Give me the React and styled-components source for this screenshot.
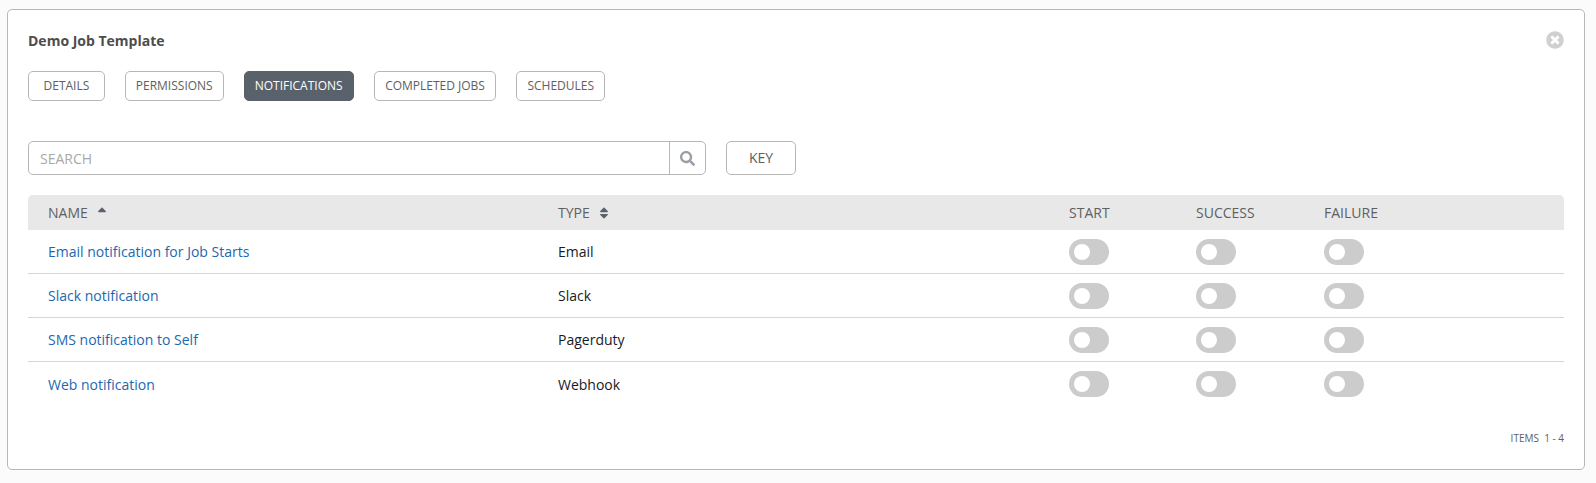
import React from "react";
import styled, { createGlobalStyle } from "styled-components";
import { FaSearch, FaTimesCircle, FaSort, FaSortUp } from "react-icons/fa";

const GlobalStyle = createGlobalStyle`
  html, body {
    margin: 0;
    padding: 0;
    background: #fbfbfb;
    font-family: "Open Sans", sans-serif;
  }
  * {
    box-sizing: border-box;
  }
`;

const Page = styled.div`
  height: 483px;
  padding: 9px 11px 13px 7px;
`;

const Panel = styled.section`
  position: relative;
  height: 461px;
  padding: 20px 20px 0 20px;
  background: white;
  border: 1px solid #b7b7b7;
  border-radius: 5px;
`;

const Title = styled.h1`
  margin: 0;
  height: 21px;
  font-size: 14px;
  line-height: 21px;
  font-weight: 700;
  color: #4d4d4d;
`;

const Close = styled.button`
  position: absolute;
  top: 21px;
  right: 20px;
  padding: 0;
  display: flex;
  border: 0;
  background: none;
  color: #d0d0d0;
  font-size: 18px;
`;

const Tabs = styled.nav`
  display: flex;
  gap: 20px;
  margin-top: 20px;
`;

const Tab = styled.button`
  height: 30px;
  padding: 0 ${(p) => p.$pad || 10}px 1px;
  font-family: inherit;
  font-size: 12px;
  color: ${(p) => (p.$active ? "white" : "#606060")};
  background: ${(p) => (p.$active ? "#59616b" : "white")};
  border: 1px solid ${(p) => (p.$active ? "#59616b" : "#b7b7b7")};
  border-radius: 5px;
`;

const Toolbar = styled.div`
  display: flex;
  gap: 20px;
  margin-top: 40px;
`;

const SearchBox = styled.div`
  display: flex;
  width: 678px;
  height: 34px;
  border: 1px solid #b7b7b7;
  border-radius: 5px;
`;

const SearchInput = styled.div`
  flex: 1;
  padding: 1px 0 0 11px;
  font-size: 14px;
  line-height: 32px;
  color: #a9a9a9;
`;

const SearchButton = styled.div`
  width: 36px;
  display: flex;
  align-items: center;
  justify-content: center;
  border-left: 1px solid #b7b7b7;
  color: #999fa6;
  font-size: 15px;
`;

const KeyButton = styled.button`
  width: 70px;
  height: 34px;
  padding: 0 0 2px;
  font-family: inherit;
  font-size: 14px;
  color: #606060;
  background: white;
  border: 1px solid #b7b7b7;
  border-radius: 5px;
`;

const columns = "510px 511px 127px 128px 1fr";

const TableHead = styled.div`
  display: grid;
  grid-template-columns: ${columns};
  align-items: center;
  height: 35px;
  margin-top: 20px;
  padding-left: 20px;
  background: #e8e8e8;
  border-radius: 5px 5px 0 0;
  color: #606060;
`;

const HeadCell = styled.div`
  display: flex;
  align-items: center;
  gap: 7px;
  font-size: 14px;
`;

const SortIcon = styled.span`
  display: flex;
  font-size: 14px;
  color: #59616b;
`;

const Row = styled.div`
  display: grid;
  grid-template-columns: ${columns};
  align-items: center;
  height: 44px;
  padding-left: 20px;
  border-bottom: ${(p) => (p.$last ? "0" : "1px solid #d7d7d7")};
  color: #161b1f;
`;

const NameLink = styled.a`
  color: #1c68b0;
  text-decoration: none;
  font-size: 14px;
`;

const TypeCell = styled.div`
  font-size: 14px;
`;

const Toggle = styled.div`
  position: relative;
  width: 40px;
  height: 26px;
  background: #cccccc;
  border-radius: 13px;

  &::after {
    content: "";
    position: absolute;
    top: 5px;
    left: 5px;
    width: 16px;
    height: 16px;
    border-radius: 50%;
    background: white;
  }
`;

const Footer = styled.div`
  display: flex;
  justify-content: flex-end;
  margin-top: 25px;
  font-size: 10px;
  color: #606060;
  white-space: pre;
`;

const notifications = [
  { name: "Email notification for Job Starts", type: "Email" },
  { name: "Slack notification", type: "Slack" },
  { name: "SMS notification to Self", type: "Pagerduty" },
  { name: "Web notification", type: "Webhook" },
];

const tabs = [
  { label: "DETAILS", pad: 14.5 },
  { label: "PERMISSIONS" },
  { label: "NOTIFICATIONS", active: true },
  { label: "COMPLETED JOBS", pad: 10.5 },
  { label: "SCHEDULES" },
];

const App = () => {
  return (
    <Page>
      <GlobalStyle />
      <Panel>
        <Title>Demo Job Template</Title>
        <Close aria-label="Close">
          <FaTimesCircle />
        </Close>
        <Tabs>
          {tabs.map((tab) => (
            <Tab key={tab.label} $active={tab.active} $pad={tab.pad}>
              {tab.label}
            </Tab>
          ))}
        </Tabs>
        <Toolbar>
          <SearchBox>
            <SearchInput>SEARCH</SearchInput>
            <SearchButton>
              <FaSearch />
            </SearchButton>
          </SearchBox>
          <KeyButton>KEY</KeyButton>
        </Toolbar>
        <TableHead>
          <HeadCell>
            NAME
            <SortIcon>
              <FaSortUp />
            </SortIcon>
          </HeadCell>
          <HeadCell>
            TYPE
            <SortIcon>
              <FaSort />
            </SortIcon>
          </HeadCell>
          <HeadCell>START</HeadCell>
          <HeadCell>SUCCESS</HeadCell>
          <HeadCell>FAILURE</HeadCell>
        </TableHead>
        {notifications.map((item, i) => (
          <Row key={item.name} $last={i === notifications.length - 1}>
            <NameLink href="#">{item.name}</NameLink>
            <TypeCell>{item.type}</TypeCell>
            <Toggle />
            <Toggle />
            <Toggle />
          </Row>
        ))}
        <Footer>ITEMS  1 - 4</Footer>
      </Panel>
    </Page>
  );
};

export default App;
